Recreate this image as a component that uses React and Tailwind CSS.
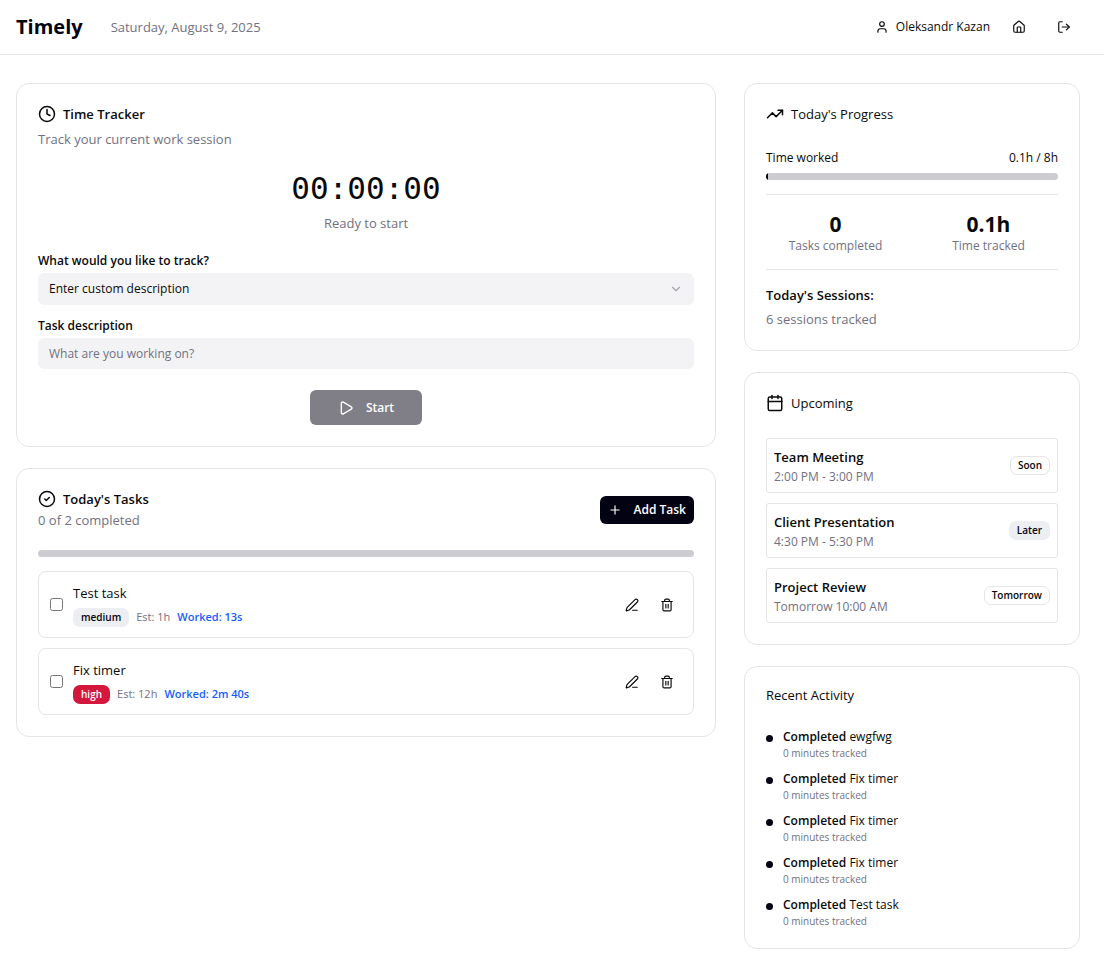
import {
  Calendar,
  ChevronDown,
  CircleCheck,
  Clock,
  House,
  LogOut,
  PenLine,
  Play,
  Plus,
  Trash2,
  TrendingUp,
  User,
} from "lucide-react";

const TASKS = [
  {
    id: "test-task",
    title: "Test task",
    priority: "medium",
    estimate: "1h",
    worked: "13s",
  },
  {
    id: "fix-timer",
    title: "Fix timer",
    priority: "high",
    estimate: "12h",
    worked: "2m 40s",
  },
];

const EVENTS = [
  { title: "Team Meeting", time: "2:00 PM - 3:00 PM", badge: "Soon", variant: "outline" },
  { title: "Client Presentation", time: "4:30 PM - 5:30 PM", badge: "Later", variant: "secondary" },
  { title: "Project Review", time: "Tomorrow 10:00 AM", badge: "Tomorrow", variant: "outline" },
];

const ACTIVITY = ["ewgfwg", "Fix timer", "Fix timer", "Fix timer", "Test task"];

const BADGE_VARIANTS = {
  outline: "border-[#e5e5e5] text-[#0a0a0a]",
  secondary: "border-transparent bg-[#eceef2] text-[#030213]",
  destructive: "border-transparent bg-[#d4183d] text-white",
};

function Badge({ variant, children }) {
  return (
    <span
      className={`inline-flex shrink-0 items-center rounded-[7px] border px-[7px] text-[10px] leading-[17px] font-semibold ${BADGE_VARIANTS[variant]}`}
    >
      {children}
    </span>
  );
}

function Card({ children }) {
  return <section className="rounded-[13px] border border-[#e5e5e5] bg-white p-[21px]">{children}</section>;
}

function ProgressBar({ label, value }) {
  return (
    <div
      role="progressbar"
      aria-label={label}
      aria-valuenow={value}
      aria-valuemin={0}
      aria-valuemax={100}
      className="h-[7px] overflow-hidden rounded-full bg-[#cdccd0]"
    >
      <div className="h-full bg-[#030213]" style={{ width: `${value}%` }} />
    </div>
  );
}

function IconButton({ label, children }) {
  return (
    <button type="button" aria-label={label} className="flex h-7 w-8 items-center justify-center rounded-md hover:bg-gray-100">
      {children}
    </button>
  );
}

function Header() {
  return (
    <header className="flex h-[55px] items-center justify-between border-b border-[#e5e5e5] pr-6 pl-4">
      <div className="flex items-center gap-7">
        <h1 className="text-[20px] leading-7 font-bold text-[#030213]">Timely</h1>
        <p className="text-[13px] leading-5 text-[#717182]">Saturday, August 9, 2025</p>
      </div>
      <div className="flex items-center gap-[13px]">
        <div className="flex items-center gap-[7px]">
          <User size={14} />
          <span className="text-[12px] leading-[18px]">Oleksandr Kazan</span>
        </div>
        <IconButton label="Home">
          <House size={14} />
        </IconButton>
        <IconButton label="Log out">
          <LogOut size={14} />
        </IconButton>
      </div>
    </header>
  );
}

function TimeTracker() {
  return (
    <Card>
      <h2 className="flex items-center gap-[7px] text-[13px] leading-[18px] font-semibold">
        <Clock size={18} />
        Time Tracker
      </h2>
      <p className="mt-[6px] text-[13px] leading-5 text-[#717182]">Track your current work session</p>

      <div className="mt-[21px] text-center">
        <div className="font-['DejaVu_Sans_Mono',monospace] text-[31px] leading-9">00:00:00</div>
        <p className="mt-[7px] text-[13px] leading-5 text-[#717182]">Ready to start</p>
      </div>

      <div className="mt-[21px] flex flex-col gap-[5px]">
        <label htmlFor="track-target" className="text-[12px] leading-[14px] font-semibold">
          What would you like to track?
        </label>
        <div className="relative">
          <select
            id="track-target"
            className="block h-8 w-full appearance-none rounded-md bg-[#f3f3f5] px-[11px] text-[12px]"
          >
            <option>Enter custom description</option>
            <option>Test task</option>
            <option>Fix timer</option>
          </select>
          <ChevronDown
            size={14}
            className="pointer-events-none absolute top-1/2 right-[11px] -translate-y-1/2 text-[#717182] opacity-60"
          />
        </div>
      </div>

      <div className="mt-[14px] flex flex-col gap-[5px]">
        <label htmlFor="task-description" className="text-[12px] leading-[14px] font-semibold">
          Task description
        </label>
        <input
          id="task-description"
          type="text"
          placeholder="What are you working on?"
          className="h-[31px] w-full rounded-md bg-[#f3f3f5] px-[11px] text-[12px] placeholder:text-[#717182]"
        />
      </div>

      <div className="mt-[21px] flex justify-center">
        <button
          type="button"
          disabled
          className="flex h-[35px] items-center gap-3 rounded-md bg-[#030213] px-7 text-[12px] font-semibold text-white opacity-50"
        >
          <Play size={16} />
          Start
        </button>
      </div>
    </Card>
  );
}

function TaskRow({ task }) {
  return (
    <li className="flex items-center gap-[10px] rounded-lg border border-[#e5e5e5] px-[10px] py-[10px]">
      <input id={task.id} type="checkbox" className="ml-px size-[13px] shrink-0" />
      <div className="min-w-0 flex-1">
        <label htmlFor={task.id} className="block text-[13px] leading-[22px]">
          {task.title}
        </label>
        <div className="mt-[3px] flex h-5 items-center gap-[7px] text-[11px] leading-[18px]">
          <Badge variant={task.priority === "high" ? "destructive" : "secondary"}>{task.priority}</Badge>
          <span className="text-[#717182]">Est: {task.estimate}</span>
          <span className="font-semibold text-[#155dfc]">Worked: {task.worked}</span>
        </div>
      </div>
      <div className="flex items-center gap-[3px]">
        <IconButton label={`Edit ${task.title}`}>
          <PenLine size={14} />
        </IconButton>
        <IconButton label={`Delete ${task.title}`}>
          <Trash2 size={14} />
        </IconButton>
      </div>
    </li>
  );
}

function Tasks() {
  return (
    <Card>
      <div className="flex items-center justify-between">
        <div>
          <h2 className="flex items-center gap-[7px] text-[13px] leading-[18px] font-semibold">
            <CircleCheck size={18} />
            Today's Tasks
          </h2>
          <p className="mt-0.5 text-[13px] leading-5 text-[#717182]">0 of 2 completed</p>
        </div>
        <button
          type="button"
          className="flex h-7 items-center gap-3 rounded-md bg-[#030213] px-2 text-[12px] font-semibold text-white"
        >
          <Plus size={14} />
          Add Task
        </button>
      </div>
      <div className="mt-5">
        <ProgressBar label="Tasks completed" value={0} />
      </div>
      <ul className="mt-[14px] flex flex-col gap-[10px]">
        {TASKS.map((task) => (
          <TaskRow key={task.id} task={task} />
        ))}
      </ul>
    </Card>
  );
}

function Stat({ value, label }) {
  return (
    <div className="text-center">
      <div className="text-[21px] leading-7 font-bold">{value}</div>
      <div className="text-[12px] leading-4 text-[#717182]">{label}</div>
    </div>
  );
}

function TodaysProgress() {
  return (
    <Card>
      <h2 className="flex items-center gap-[7px] text-[13px] leading-[18px]">
        <TrendingUp size={18} />
        Today's Progress
      </h2>
      <div className="mt-[26px] mb-[6px] flex justify-between text-[12px] leading-[18px]">
        <span>Time worked</span>
        <span>0.1h / 8h</span>
      </div>
      <ProgressBar label="Time worked" value={0.7} />
      <div className="mt-[14px] grid grid-cols-2 gap-[14px] border-y border-[#e5e5e5] py-[15px]">
        <Stat value="0" label="Tasks completed" />
        <Stat value="0.1h" label="Time tracked" />
      </div>
      <h3 className="mt-[15px] text-[13px] leading-5 font-semibold">Today's Sessions:</h3>
      <p className="mt-1 text-[13px] leading-5 text-[#717182]">6 sessions tracked</p>
    </Card>
  );
}

function Upcoming() {
  return (
    <Card>
      <h2 className="flex items-center gap-[7px] text-[13px] leading-[18px]">
        <Calendar size={18} />
        Upcoming
      </h2>
      <ul className="mt-[26px] flex flex-col gap-[10px]">
        {EVENTS.map((event) => (
          <li key={event.title} className="flex items-center justify-between rounded-[3px] border border-[#e5e5e5] p-[7px]">
            <div>
              <p className="text-[13px] leading-[22px] font-semibold">{event.title}</p>
              <p className="text-[12px] leading-[17px] text-[#717182]">{event.time}</p>
            </div>
            <Badge variant={event.variant}>{event.badge}</Badge>
          </li>
        ))}
      </ul>
    </Card>
  );
}

function RecentActivity() {
  return (
    <Card>
      <h2 className="text-[13px] leading-[14px]">Recent Activity</h2>
      <ul className="mt-[25px] flex flex-col gap-[10px]">
        {ACTIVITY.map((name, index) => (
          <li key={index} className="flex gap-[10px]">
            <span className="mt-2 size-[7px] shrink-0 rounded-full bg-[#030213]" />
            <div>
              <p className="text-[12px] leading-5">
                <span className="font-semibold">Completed</span> {name}
              </p>
              <p className="text-[10px] leading-3 text-[#717182]">0 minutes tracked</p>
            </div>
          </li>
        ))}
      </ul>
    </Card>
  );
}

export default function App() {
  return (
    <div className="min-h-screen bg-white font-['Open_Sans',sans-serif] text-[#0a0a0a]">
      <Header />
      <main className="grid grid-cols-3 items-start gap-7 pt-7 pr-6 pb-3 pl-4">
        <div className="col-span-2 flex flex-col gap-[21px]">
          <TimeTracker />
          <Tasks />
        </div>
        <div className="flex flex-col gap-[21px]">
          <TodaysProgress />
          <Upcoming />
          <RecentActivity />
        </div>
      </main>
    </div>
  );
}
